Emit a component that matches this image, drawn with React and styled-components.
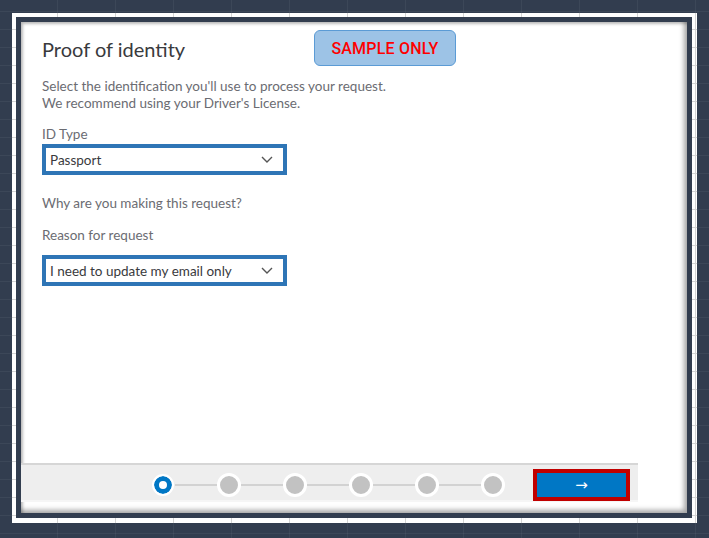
import React from "react";
import styled, { createGlobalStyle, css } from "styled-components";

const GlobalStyle = createGlobalStyle`
  html, body {
    margin: 0;
    padding: 0;
  }
  body {
    background-color: #323d4f;
    font-family: "Lato", "Open Sans", sans-serif;
  }
  * {
    box-sizing: border-box;
  }
`;

// spreadsheet cell lines that sit behind the dialog
const gridLines = (color) => css`
  background-image: linear-gradient(to right, ${color} 1px, transparent 1px),
    linear-gradient(to bottom, ${color} 1px, transparent 1px);
  background-size: 58px 18px;
  background-position: 57px 11px;
  background-attachment: fixed;
`;

const Page = styled.div`
  width: 709px;
  height: 538px;
  padding: 13px 12px 15px 12px;
  background-color: #323d4f;
  ${gridLines("rgba(255, 255, 255, 0.05)")}
`;

const Sheet = styled.div`
  height: 100%;
  padding: 4px 5px 5px 4px;
  background-color: #ffffff;
  ${gridLines("#d4d4d4")}
`;

const Rim = styled.div`
  height: 100%;
  padding: 5px;
  background: #323d4f;
`;

const Panel = styled.div`
  position: relative;
  height: 100%;
  background: #ffffff;
  box-shadow: inset -3px -3px 5px rgba(0, 0, 0, 0.35),
    inset 2px 2px 3px rgba(0, 0, 0, 0.25);
  padding: 0 49px 11px 0;
  display: flex;
  flex-direction: column;
`;

const Content = styled.div`
  flex: 1;
  padding: 15px 0 0 21px;
`;

const Title = styled.h1`
  margin: 0;
  font-size: 20px;
  line-height: 25px;
  font-weight: 400;
  color: #393a3d;
`;

const Stamp = styled.div`
  position: absolute;
  left: 293px;
  top: 8px;
  width: 142px;
  height: 36px;
  border: 1px solid #5b9bd5;
  border-radius: 6px;
  background: #9dc3e6;
  color: #ff0000;
  font-family: "Roboto", sans-serif;
  font-weight: 500;
  font-size: 16px;
  letter-spacing: 0.2px;
  display: flex;
  align-items: center;
  justify-content: center;
`;

const Text = styled.p`
  margin: ${(p) => p.$top || 0}px 0 0;
  font-size: 13.5px;
  line-height: 17px;
  color: #6b6c72;
`;

const Field = styled.div`
  margin-top: ${(p) => p.$top || 0}px;
  width: 245px;
  height: 31px;
  border: 4px solid #2e75b6;
  padding: 0 10px 0 4px;
  display: flex;
  align-items: center;
  justify-content: space-between;
  font-size: 13.5px;
  color: #393a3d;
  cursor: pointer;
`;

const Footer = styled.div`
  height: 39px;
  background: #eeeeee;
  border-top: 2px solid #d6d6d6;
  border-bottom: 2px solid #f6f6f6;
  display: grid;
  grid-template-columns: 1fr auto 1fr;
  align-items: start;
  padding: 2px 8px 0 0;
`;

const Steps = styled.div`
  grid-column: 2;
  height: 36px;
  display: flex;
  align-items: center;
  margin-left: 4px;
`;

const Dot = styled.span`
  border-radius: 50%;
  flex: none;
  ${(p) =>
    p.$active
      ? css`
          width: 22px;
          height: 22px;
          margin: 0 1px;
          border: 2px solid #ffffff;
          background: #ffffff;
          box-shadow: inset 0 0 0 5px #0077c5;
        `
      : css`
          width: 24px;
          height: 24px;
          border: 3px solid #ffffff;
          background: #c2c2c2;
        `}
`;

const Link = styled.span`
  width: 42px;
  height: 2px;
  background: #d2d2d2;
`;

const NextButton = styled.button`
  grid-column: 3;
  justify-self: end;
  margin-top: 2px;
  width: 97px;
  height: 32px;
  border: 4px solid #c00000;
  background: #0077c5;
  color: #ffffff;
  font-family: "DejaVu Sans", sans-serif;
  font-size: 15px;
  line-height: 1;
  padding: 0;
  cursor: pointer;
`;

const Chevron = () => (
  <svg width="12" height="7" viewBox="0 0 12 7">
    <polyline
      points="1,1 6,6 11,1"
      fill="none"
      stroke="#555"
      strokeWidth="1.4"
    />
  </svg>
);

const steps = [true, false, false, false, false, false];

export default function App() {
  return (
    <>
      <GlobalStyle />
      <Page>
        <Sheet>
          <Rim>
            <Panel>
              <Stamp>SAMPLE ONLY</Stamp>
              <Content>
                <Title>Proof of identity</Title>
                <Text $top={16}>
                  Select the identification you'll use to process your request.
                  <br />
                  We recommend using your Driver's License.
                </Text>
                <Text $top={14}>ID Type</Text>
                <Field $top={1}>
                  <span>Passport</span>
                  <Chevron />
                </Field>
                <Text $top={20}>Why are you making this request?</Text>
                <Text $top={15}>Reason for request</Text>
                <Field $top={11}>
                  <span>I need to update my email only</span>
                  <Chevron />
                </Field>
              </Content>
              <Footer>
                <Steps>
                  {steps.map((active, i) => (
                    <React.Fragment key={i}>
                      {i > 0 && <Link />}
                      <Dot $active={active} />
                    </React.Fragment>
                  ))}
                </Steps>
                <NextButton>→</NextButton>
              </Footer>
            </Panel>
          </Rim>
        </Sheet>
      </Page>
    </>
  );
}
